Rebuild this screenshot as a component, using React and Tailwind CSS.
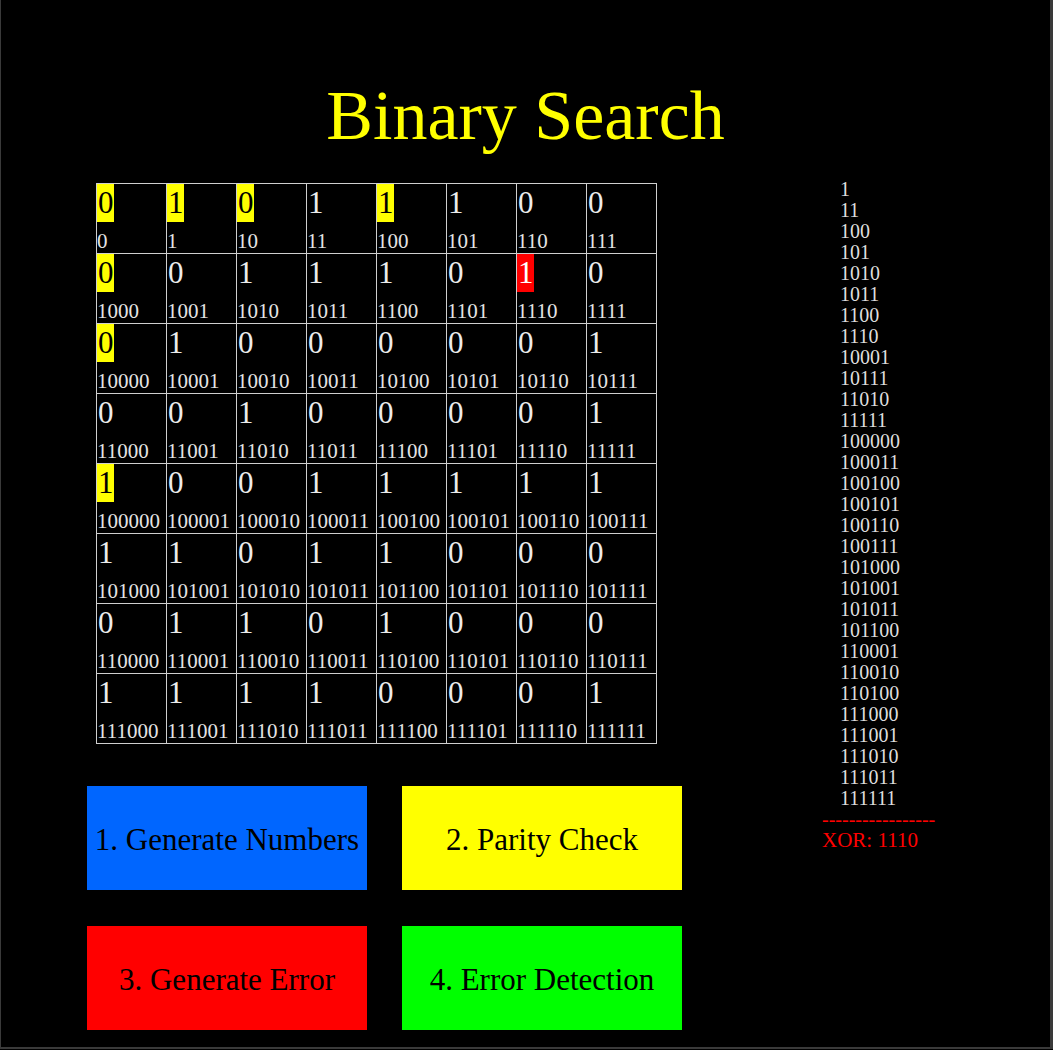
import React from 'react'

// bits of the 8x8 block, row by row
const rows = [
  '01011100',
  '00111010',
  '01000001',
  '00100001',
  '10011111',
  '11011000',
  '01101000',
  '11110001',
]

const parityCells = [0, 1, 2, 4, 8, 16, 32]
const errorCell = 14

const bits = rows.join('').split('')
const ones = bits.map((b, i) => (b === '1' ? i : -1)).filter((i) => i > 0)

const Cell = ({ index, bit }) => {
  let digitClass = 'text-[#ececec]'
  if (parityCells.includes(index)) digitClass = 'bg-[#ffff00] text-black'
  if (index === errorCell) digitClass = 'bg-[#ff0000] text-white'

  return (
    <div className="w-[70px] h-[70px] border-r border-b border-[#cfcfcf] flex flex-col items-start overflow-hidden">
      <span className={`inline-block h-[38px] leading-[38px] text-[31px] pl-[1px] ${digitClass}`}>
        {bit}
      </span>
      <span className="mt-[7px] text-[21px] leading-[24px] text-[#e4e4e4] whitespace-nowrap">
        {index.toString(2)}
      </span>
    </div>
  )
}

const buttons = [
  { label: '1. Generate Numbers', color: 'bg-[#0066ff]' },
  { label: '2. Parity Check', color: 'bg-[#ffff00]' },
  { label: '3. Generate Error', color: 'bg-[#ff0000]' },
  { label: '4. Error Detection', color: 'bg-[#00ff00]' },
]

const App = () => {
  return (
    <div className="w-full h-[1050px] bg-black font-['Liberation_Serif',serif]">
      <div className="h-[1049px] bg-black border-l border-r-[3px] border-b-2 border-[#3a3a3a] pt-[76px]">
        {/* Title */}
        <h1 className="text-center text-[70px] leading-[80px] text-[#ffff00] font-normal">
          Binary Search
        </h1>

        <div className="flex items-start mt-[27px] pl-[86px]">
          {/* Left side: grid + buttons */}
          <div className="w-[595px] flex flex-col">
            <div className="ml-[9px] grid grid-cols-8 w-[561px] border-l border-t border-[#cfcfcf]">
              {bits.map((bit, i) => (
                <Cell key={i} index={i} bit={bit} />
              ))}
            </div>

            <div className="mt-[42px] grid grid-cols-[280px_280px] gap-x-[35px] gap-y-[36px]">
              {buttons.map((b) => (
                <button
                  key={b.label}
                  className={`h-[104px] ${b.color} text-black text-[31px] pt-[4px] whitespace-nowrap flex items-center justify-center`}
                >
                  {b.label}
                </button>
              ))}
            </div>
          </div>

          {/* Right side: indices of set bits */}
          <div className="ml-[140px] -mt-1 text-[20px] leading-[21px]">
            <div className="pl-[18px] text-[#dedede]">
              {ones.map((i) => (
                <div key={i}>{i.toString(2)}</div>
              ))}
            </div>
            <div className="text-[#ff0000]">-----------------</div>
            <div className="text-[#ff0000] text-[21px]">XOR: {errorCell.toString(2)}</div>
          </div>
        </div>
      </div>
    </div>
  )
}

export default App
